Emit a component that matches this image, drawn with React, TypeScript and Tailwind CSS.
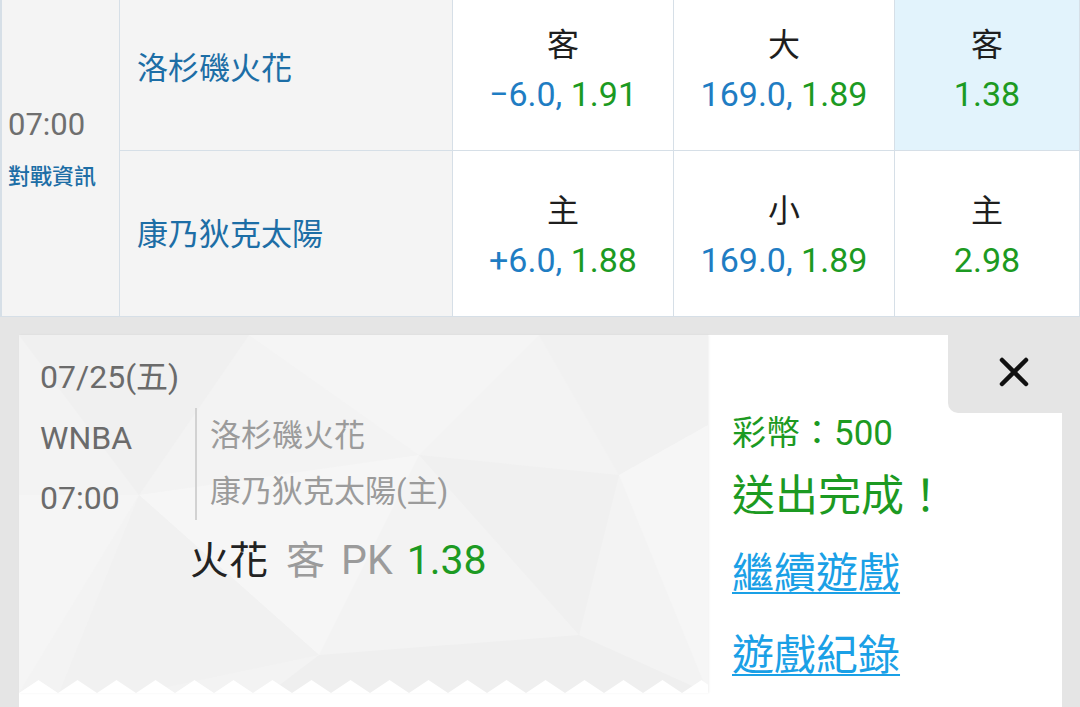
import React from "react";

const font = "font-[Roboto,'Noto_Sans_CJK_TC',sans-serif]";

const OddsCell = ({label, line, price, active}: {label: string; line?: string; price: string; active?: boolean}) => {
    return (
        <div className={`flex flex-col items-center justify-center pt-[4px] border-r border-b border-[#d6dfe7] ${active ? "bg-[#e2f3fc]" : "bg-white"}`}>
            <div className="text-[32px] leading-[48px] text-[#1e1e1e]">{label}</div>
            <div className="text-[34px] leading-[50px] whitespace-nowrap">
                {line && <span className="text-[#1f7dc3]">{line}, </span>}
                <span className="text-[#1c9a22]">{price}</span>
            </div>
        </div>
    )
}

const TicketBackdrop = () => {
    // faint low-poly pattern + zigzag cut at the bottom
    const teeth: string[] = ["0,14"];
    for (let x = 0; x <= 700; x += 39) {
        teeth.push(`${x},14`, `${x + 19.5},1`);
    }
    teeth.push("700,14", "700,20", "0,20");
    return (
        <svg className="absolute inset-0" width="689" height="358" viewBox="0 0 689 358">
            <rect width="689" height="358" fill="#f3f3f3"/>
            <polygon points="0,0 230,0 120,160" fill="#f0f0f0"/>
            <polygon points="230,0 520,0 400,120" fill="#f5f5f5"/>
            <polygon points="520,0 689,0 689,90 600,140" fill="#f1f1f1"/>
            <polygon points="120,160 400,120 300,320" fill="#f6f6f6"/>
            <polygon points="400,120 600,140 560,300" fill="#f0f0f0"/>
            <polygon points="0,160 120,160 0,358" fill="#f5f5f5"/>
            <polygon points="300,320 560,300 689,358 250,358" fill="#efefef"/>
            <polygon points="600,140 689,90 689,358" fill="#f6f6f6"/>
            <polygon points="120,160 300,320 120,358 40,358" fill="#f1f1f1"/>
            <g transform="translate(0,344)">
                <polygon points={teeth.join(" ")} fill="#ffffff"/>
            </g>
        </svg>
    )
}

export default function App() {
    return (
        <div className={`w-[1080px] h-[707px] overflow-hidden bg-[#e5e5e5] ${font}`}>
            {/* odds table */}
            <div className="-mt-[15px] grid grid-cols-[120px_333px_221px_221px_185px] grid-rows-[166px_166px]">
                <div className="row-span-2 flex flex-col justify-center pl-[6px] bg-[#f4f4f4] border-l-2 border-r border-b border-[#d6dfe7]">
                    <div className="text-[31px] leading-[44px] text-[#6f6f6f]">07:00</div>
                    <div className="mt-[8px] text-[22px] leading-[44px] font-medium text-[#1d6ea6]">對戰資訊</div>
                </div>
                <div className="flex items-center pl-[17px] pt-[3px] bg-[#f4f4f4] border-r border-b border-[#d6dfe7] text-[31px] text-[#1d6ea6]">洛杉磯火花</div>
                <OddsCell label="客" line="−6.0" price="1.91"/>
                <OddsCell label="大" line="169.0" price="1.89"/>
                <OddsCell label="客" price="1.38" active/>
                <div className="flex items-center pl-[17px] pt-[3px] bg-[#f4f4f4] border-r border-b border-[#d6dfe7] text-[31px] text-[#1d6ea6]">康乃狄克太陽</div>
                <OddsCell label="主" line="+6.0" price="1.88"/>
                <OddsCell label="小" line="169.0" price="1.89"/>
                <OddsCell label="主" price="2.98"/>
            </div>

            {/* bet slip */}
            <div className="pt-[18px] pl-[19px] pr-[18px]">
                <div className="flex bg-white h-[400px]">
                    <div className="relative w-[689px] h-[358px] shadow-[1px_0_2px_rgba(0,0,0,0.06)]">
                        <TicketBackdrop/>
                        <div className="relative pl-[21px] pt-[22px]">
                            <div className="text-[32px] leading-[40px] text-[#6b6b6b]">07/25(五)</div>
                            <div className="mt-[11px] flex">
                                <div className="w-[155px] text-[32px] leading-[60px] text-[#6b6b6b]">
                                    <div>WNBA</div>
                                    <div>07:00</div>
                                </div>
                                <div className="h-[112px] border-l-2 border-[#d2d2d2] pl-[13px] text-[31px] leading-[56px] text-[#9b9b9b]">
                                    <div>洛杉磯火花</div>
                                    <div>康乃狄克太陽(主)</div>
                                </div>
                            </div>
                            <div className="mt-[7px] ml-[150px] flex items-baseline text-[39px] leading-[50px] whitespace-nowrap">
                                <span className="mr-[18px] text-[#222222]">火花</span>
                                <span className="mr-[16px] text-[#9b9b9b]">客</span>
                                <span className="mr-[14px] text-[41px] text-[#9b9b9b]">PK</span>
                                <span className="text-[41px] text-[#1c9a22]">1.38</span>
                            </div>
                        </div>
                    </div>

                    <div className="flex-1 flex flex-col">
                        <div className="h-[78px] flex justify-end">
                            <div className="w-[114px] h-full bg-[#e5e5e5] rounded-bl-[10px] flex items-center justify-center pb-[4px] pl-[18px]">
                                <svg width="30" height="30" viewBox="0 0 30 30">
                                    <path d="M3 3 L27 27 M27 3 L3 27" stroke="#111111" strokeWidth="4.5" strokeLinecap="round"/>
                                </svg>
                            </div>
                        </div>
                        <div className="pl-[24px]">
                            <div className="text-[34px] leading-[40px] text-[#1c9a22]">
                                <span>彩幣</span>
                                <span className="text-[34px]">：</span>
                                <span className="text-[35px]">500</span>
                            </div>
                            <div className="mt-[17px] text-[43px] leading-[50px] text-[#1c9a22]">送出完成！</div>
                            <div className="mt-[28px] text-[42px] leading-[50px] text-[#1aa0e6] underline decoration-2 underline-offset-[4px]">繼續遊戲</div>
                            <div className="mt-[32px] text-[42px] leading-[50px] text-[#1aa0e6] underline decoration-2 underline-offset-[4px]">遊戲紀錄</div>
                        </div>
                    </div>
                </div>
            </div>
        </div>
    )
}
